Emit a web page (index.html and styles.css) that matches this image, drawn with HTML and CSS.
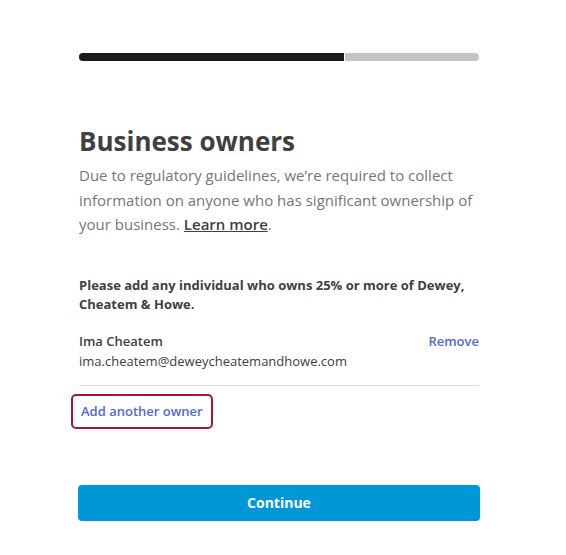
FILE: index.html
```html
<!DOCTYPE html>
<html lang="en">
<head>
  <meta charset="UTF-8" />
  <title>Business owners</title>
  <link rel="stylesheet" href="styles.css">
</head>
<body>
  <div class="page">
    <!-- Step progress -->
    <div class="progress">
      <div class="progress-fill" style="width: 66.25%"></div>
    </div>

    <h1>Business owners</h1>
    <p class="intro">
      Due to regulatory guidelines, we’re required to collect information on anyone who has significant ownership of your business. <a href="#" class="learn">Learn more</a>.
    </p>

    <p class="note">Please add any individual who owns 25% or more of Dewey, Cheatem &amp; Howe.</p>

    <!-- Owner list -->
    <div class="owner">
      <div class="owner-info">
        <div class="owner-name">Ima Cheatem</div>
        <div class="owner-email">ima.cheatem@deweycheatemandhowe.com</div>
      </div>
      <a href="#" class="link">Remove</a>
    </div>

    <a href="#" class="link add-owner">Add another owner</a>

    <button type="button" class="continue">Continue</button>
  </div>
</body>
</html>
```

FILE: styles.css
```css
/* Global */
body {
  margin: 0;
  background: #fff;
  font-family: "Open Sans", "Noto Sans", sans-serif;
  color: #404040;
}
.page {
  width: 400px;
  padding: 53px 0 0 79px;
}
/* Progress bar */
.progress {
  height: 8px;
  background: #c4c4c4;
  border-radius: 4px;
  overflow: hidden;
}
.progress-fill {
  height: 100%;
  background: #1b1b1b;
  border-right: 1px solid #fff;
}
h1 {
  margin: 63px 0 0;
  font-size: 26px;
  line-height: 34px;
  font-weight: 700;
  color: #404040;
}
.intro {
  margin: 5px 0 0;
  font-size: 15px;
  line-height: 24.5px;
  color: #767676;
}
.learn {
  color: #404040;
  font-weight: 600;
}
.note {
  margin: 39px 0 0;
  font-size: 13px;
  line-height: 19px;
  font-weight: 700;
}
/* Owner row */
.owner {
  display: flex;
  justify-content: space-between;
  align-items: flex-start;
  margin-top: 17px;
  padding-bottom: 14px;
  border-bottom: 1px solid #dcdcdc;
  font-size: 13px;
  line-height: 20px;
}
.owner-name {
  font-weight: 600;
}
.link {
  color: #5468d4;
  font-weight: 600;
  font-size: 13px;
  text-decoration: none;
}
.add-owner {
  display: inline-block;
  margin: 8px 0 0 -8px;
  padding: 6px 8px;
  line-height: 19px;
  border: 2px solid #a8134b;
  border-radius: 5px;
}
/* Continue button */
.continue {
  display: block;
  width: 402px;
  height: 36px;
  margin: 56px 0 0 -1px;
  background: #0097d8;
  color: #fff;
  border: none;
  border-radius: 4px;
  font-family: inherit;
  font-size: 14px;
  font-weight: 700;
  cursor: pointer;
}
```
